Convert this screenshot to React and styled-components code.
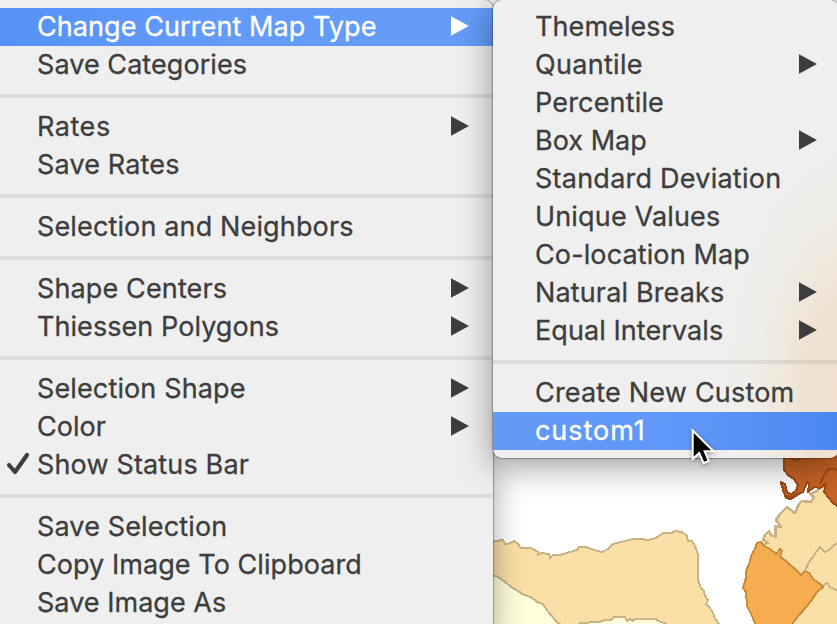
import React from 'react';
import styled, { createGlobalStyle, css } from 'styled-components';

const GlobalStyle = createGlobalStyle`
  * { box-sizing: border-box; }
  body { margin: 0; background: #fff; overflow: hidden; }
`;

const Screen = styled.main`
  position: relative;
  width: 837px;
  height: 624px;
  overflow: hidden;
  background: #fff;
  color: #3d3d3d;
  font-family: Inter, "Liberation Sans", sans-serif;
  font-size: 27px;
`;

const MapCanvas = styled.svg`
  position: absolute;
  top: 0;
  left: 0;
`;

const MenuLayer = styled.div`
  position: relative;
  display: flex;
  align-items: flex-start;
  height: 624px;
`;

const Menu = styled.ul`
  list-style: none;
  margin: 0;
  padding: 8px 0;
  flex: none;
  background: #efefef;
`;

const MainMenu = styled(Menu)`
  width: 493px;
  height: 634px;
  border-radius: 0 9px 9px 0;
  box-shadow: 0 0 1px 1px rgba(0, 0, 0, 0.28), 0 8px 32px rgba(0, 0, 0, 0.36);
  --label-start: 37px;
  --arrow-end: 24px;
`;

const SubMenu = styled(Menu)`
  position: relative;
  width: 346px;
  height: 458px;
  border-radius: 9px;
  background:
    radial-gradient(ellipse 135px 260px at 360px 395px, #f1dfcc 0%, #f0e1d1 35%, rgba(239, 232, 219, 0.8) 58%, rgba(238, 238, 230, 0.45) 80%, rgba(239, 239, 239, 0) 100%),
    #efefef;
  box-shadow: 0 0 1px 1px rgba(0, 0, 0, 0.3), 0 8px 34px rgba(0, 0, 0, 0.4);
  --label-start: 42px;
  --arrow-end: 22px;
`;

const Item = styled.li`
  display: flex;
  align-items: center;
  justify-content: space-between;
  height: 38px;
  padding: 0 var(--arrow-end) 0 var(--label-start);
  white-space: nowrap;
  ${({ $active }) => $active && css`color: #fff;`}
  ${({ $active }) => $active === 'main' && css`
    background: linear-gradient(90deg, #5591f7, #649bf9 45%, #649bf9);
  `}
  ${({ $active }) => $active === 'sub' && css`
    background: linear-gradient(90deg, #639af8 0%, #5f97f8 58%, #4a87f1 100%);
  `}
`;

const Label = styled.span`
  line-height: 38px;
  letter-spacing: ${({ $tracking }) => $tracking}px;
  -webkit-text-stroke: 0.3px currentColor;
`;

const Arrow = styled.svg`
  flex: none;
  margin-top: -2px;
`;

const Check = styled.svg`
  position: absolute;
  margin: -2px 0 0 -31px;
`;

const Separator = styled.li`
  display: flex;
  align-items: center;
  height: 24px;

  &::before {
    content: '';
    flex: 1;
    height: 4px;
    background: rgba(0, 0, 0, 0.075);
  }
`;

const Cursor = styled.svg`
  position: absolute;
  left: 686px;
  top: 424px;
  filter: drop-shadow(0 1px 2px rgba(0, 0, 0, 0.4));
`;

const mainItems = [
  { label: 'Change Current Map Type', tracking: 0.08, arrow: true, active: 'main' },
  { label: 'Save Categories', tracking: 0.06 },
  null,
  { label: 'Rates', tracking: 0.55, arrow: true },
  { label: 'Save Rates', tracking: 0.15 },
  null,
  { label: 'Selection and Neighbors', tracking: 0.14 },
  null,
  { label: 'Shape Centers', tracking: 0.13, arrow: true },
  { label: 'Thiessen Polygons', tracking: 0.06, arrow: true },
  null,
  { label: 'Selection Shape', tracking: 0.13, arrow: true },
  { label: 'Color', tracking: 0, arrow: true },
  { label: 'Show Status Bar', tracking: 0.15, checked: true },
  null,
  { label: 'Save Selection', tracking: 0.14 },
  { label: 'Copy Image To Clipboard', tracking: 0.06 },
  { label: 'Save Image As', tracking: 0.03 },
];

const mapTypes = [
  { label: 'Themeless', tracking: 0.08 },
  { label: 'Quantile', tracking: 0.3, arrow: true },
  { label: 'Percentile', tracking: 0.17 },
  { label: 'Box Map', tracking: 0.03, arrow: true },
  { label: 'Standard Deviation', tracking: 0.24 },
  { label: 'Unique Values', tracking: 0.16 },
  { label: 'Co-location Map', tracking: 0.12 },
  { label: 'Natural Breaks', tracking: 0.14, arrow: true },
  { label: 'Equal Intervals', tracking: 0.08, arrow: true },
  null,
  { label: 'Create New Custom', tracking: 0.19 },
  { label: 'custom1', tracking: 0.95, active: 'sub' },
];

function MenuItems({ items }) {
  return items.map((item, i) =>
    item ? (
      <Item key={item.label} $active={item.active}>
        {item.checked && (
          <Check width="24" height="26" viewBox="0 0 24 26">
            <path d="M3 14 L9 21 L21 4" fill="none" stroke="#3d3d3d" strokeWidth="4.2" strokeLinecap="round" strokeLinejoin="round" />
          </Check>
        )}
        <Label $tracking={item.tracking}>{item.label}</Label>
        {item.arrow && (
          <Arrow width="18" height="20" viewBox="0 0 18 20">
            <path d="M0 0.2 L18 10 L0 19.8 Z" fill="currentColor" />
          </Arrow>
        )}
      </Item>
    ) : (
      <Separator key={`separator-${i}`} />
    )
  );
}

function RegionMap() {
  return (
    <MapCanvas width="837" height="624" viewBox="0 0 837 624" strokeWidth="2" strokeLinejoin="round" shapeRendering="crispEdges">
      <path fill="#fadfa7" stroke="#c9b384" d="M488 543 L496 541 L503 540 L505 544 L508 544 L514 541 L518 544 L521 548 L531 548 L538 552 L538 555 L541 553 L549 554 L550 558 L553 555 L560 555 L570 552 L577 550 L579 547 L586 547 L594 550 L602 552 L608 549 L613 544 L625 541 L633 539 L641 539 L648 540 L656 538 L663 533 L672 533 L675 531 L682 532 L687 536 L688 541 L692 541 L695 546 L698 554 L698 580 L701 588 L704 591 L705 596 L708 600 L706 604 L710 608 L713 613 L715 618 L720 626 L488 626 Z" />
      <path fill="#ffffdc" stroke="#c9b384" d="M488 575 L496 576 L504 581 L511 587 L518 591 L524 595 L531 597 L537 602 L543 604 L546 609 L550 614 L556 621 L562 626 L488 626 Z" />
      <path fill="#ffffdc" stroke="#c9b384" d="M578 626 L580 623 L599 622 L605 620 L611 620 L614 617 L625 617 L627 621 L630 619 L633 621 L635 619 L656 619 L658 621 L665 623 L668 626 Z" />
      <path fill="#fadfa7" stroke="#c9b384" strokeWidth="2.6" d="M768 543 L763 540 L765 535 L769 531 L771 535 L776 537 L775 526 L781 527 L776 520 L780 514 L787 507 L795 513 L799 504 L802 501 L811 502 L814 497 L810 494 L817 491 L821 487 L828 484 L842 500 L842 626 L790 626 L760 545 Z" />
      <path fill="none" stroke="#c9b384" d="M805 571 L809 562 L820 547 L825 552 L829 550 L834 545 L840 542 M822 586 L827 583 L830 587 L838 591" />
      <path fill="#f5ad50" stroke="#c98b3c" d="M757 543 L761 542 L764 546 L770 549 L776 554 L780 549 L782 551 L780 556 L788 563 L796 570 L801 575 L805 571 L809 573 L814 580 L819 583 L823 587 L817 592 L811 601 L801 613 L794 621 L792 626 L756 626 L752 616 L747 606 L746 592 L743 588 L746 578 L746 571 L750 562 L751 556 L755 549 Z" />
      <path fill="#c76324" stroke="#9d4b17" d="M784 454 L784 470 L788 475 L794 479 L798 485 L796 491 L791 494 L787 492 L785 484 L781 482 L783 490 L786 498 L791 499 L797 495 L803 492 L807 482 L809 484 L808 492 L814 487 L820 488 L826 484 L824 492 L828 497 L833 503 L842 509 L842 454 Z" />
      <path fill="none" stroke="#9d4b17" d="M790 457 L795 461 L802 458 M820 484 L824 475 L829 469 L840 470 M781 483 L785 495 L790 497 L798 493" />
    </MapCanvas>
  );
}

export default function App() {
  return (
    <>
      <GlobalStyle />
      <Screen>
        <RegionMap />
        <MenuLayer>
          <MainMenu><MenuItems items={mainItems} /></MainMenu>
          <SubMenu><MenuItems items={mapTypes} /></SubMenu>
        </MenuLayer>
        <Cursor width="34" height="44" viewBox="0 0 34 44">
          <path d="M6.7 6.5 V35 L13.2 29 L17.6 39.2 L22.8 37 L18.6 27.2 H27.6 Z" fill="#000" stroke="#fff" strokeWidth="2" />
        </Cursor>
      </Screen>
    </>
  );
}
